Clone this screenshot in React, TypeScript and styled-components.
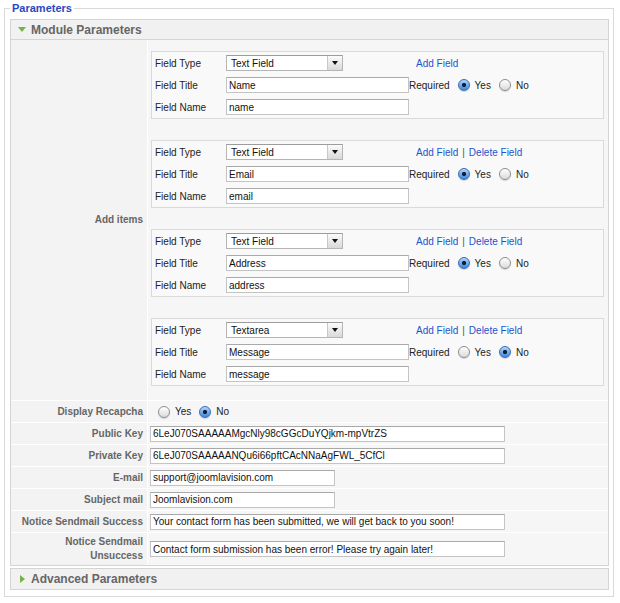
import React from 'react'
import styled, { createGlobalStyle } from 'styled-components'

const GlobalStyle = createGlobalStyle`
  body {
    margin: 0;
    background: #fff;
    font-family: "Liberation Sans", Arial, sans-serif;
  }
`

const Fieldset = styled.fieldset`
  margin: 1px 0 0 4px;
  width: 610px;
  min-width: 0;
  box-sizing: border-box;
  padding: 4px 4px 6px 5px;
  border: 1px solid #d9d9d9;
`

const Legend = styled.legend`
  padding: 0 2px;
  font-size: 11px;
  line-height: 14px;
  font-weight: bold;
  color: #2748c4;
`

const Panel = styled.div<{ $gap?: boolean }>`
  border: 1px solid #d4d4d4;
  background: #f5f5f5;
  margin-top: ${({ $gap }) => ($gap ? '2px' : '0')};
`

const PanelHeader = styled.div<{ $open?: boolean }>`
  display: flex;
  align-items: center;
  height: 20px;
  box-sizing: border-box;
  padding-left: 7px;
  background: #f1f1f1;
  border-bottom: ${({ $open }) => ($open ? '1px solid #d4d4d4' : 'none')};
  font-size: 12px;
  font-weight: bold;
  color: #666;
`

const Toggle = styled.span<{ $open?: boolean }>`
  display: flex;
  align-items: center;
  justify-content: center;
  width: 8px;
  height: 10px;
  margin-right: 5px;

  &::before {
    content: '';
    width: 0;
    height: 0;
    border-style: solid;
    border-color: transparent;
    ${({ $open }) =>
      $open
        ? 'border-width: 5px 4px 0 4px; border-top-color: #74b34a;'
        : 'border-width: 4px 0 4px 5px; border-left-color: #74b34a;'}
  }
`

const ParamGrid = styled.div`
  display: grid;
  grid-template-columns: 136px 1fr;
  gap: 1px;
  background: #fff;
`

const KeyCell = styled.div<{ $tall?: boolean }>`
  display: flex;
  align-items: center;
  justify-content: flex-end;
  text-align: right;
  min-height: ${({ $tall }) => ($tall ? '32px' : '21px')};
  padding-right: 4px;
  background: #f3f3f3;
  font-size: 10px;
  line-height: 14px;
  font-weight: bold;
  color: #666;
`

const ValueCell = styled.div`
  display: flex;
  align-items: center;
  padding: 0 2px;
  background: #f6f6f6;
  font-size: 10px;
  color: #222;
`

const ItemList = styled.div`
  display: flex;
  flex-direction: column;
  gap: 21px;
  padding: 11px 4px 14px 3px;
  background: #f6f6f6;
`

const ItemBox = styled.div`
  border: 1px solid #dadada;
  background: #f9f9f9;
  padding-left: 3px;
`

const ItemRow = styled.div`
  display: flex;
  align-items: center;
  height: 22px;
  font-size: 10px;
  color: #222;
`

const ItemLabel = styled.span`
  width: 71px;
  flex: none;
`

const Slot = styled.div`
  width: 190px;
  flex: none;
`

const TextInput = styled.input<{ $w: number }>`
  width: ${({ $w }) => $w}px;
  height: 16px;
  box-sizing: border-box;
  margin: 0;
  padding: 0 2px;
  border: 1px solid #c4c4c4;
  border-top-color: #a9a9a9;
  background: #fff;
  font-family: "Liberation Sans", Arial, sans-serif;
  font-size: 10px;
  color: #111;
  outline: none;
`

const Select = styled.div`
  display: flex;
  align-items: center;
  width: 117px;
  height: 16px;
  box-sizing: border-box;
  border: 1px solid #b5b5b5;
  border-top-color: #9c9c9c;
  background: #fff;
  font-size: 10px;
  color: #111;
`

const SelectText = styled.span`
  flex: 1;
  padding-left: 4px;
`

const SelectArrow = styled.span`
  display: flex;
  align-items: center;
  justify-content: center;
  width: 14px;
  height: 100%;
  border-left: 1px solid #c8c8c8;
  background: linear-gradient(#fbfbfb, #d9d9d9);

  &::before {
    content: '';
    border-style: solid;
    border-color: #111 transparent transparent transparent;
    border-width: 4px 3px 0 3px;
  }
`

const Radio = styled.input`
  appearance: none;
  width: 12px;
  height: 12px;
  box-sizing: border-box;
  margin: 0 5px 0 8px;
  border-radius: 50%;
  border: 1px solid #8e8e8e;
  background: linear-gradient(#ffffff, #dadada);
  box-shadow: 0 1px 1px rgba(0, 0, 0, 0.15);

  &:checked {
    border-color: #3b6daf;
    background: radial-gradient(circle, #0e1f36 0 1.8px, transparent 2.4px),
      linear-gradient(#b2d4f8, #3c86de);
  }
`

const Link = styled.a`
  color: #1b54cf;
  text-decoration: none;
  font-size: 10px;
`

const Sep = styled.span`
  color: #555;
  margin: 0 4px;
`

type Item = {
  type: string
  title: string
  name: string
  required: boolean
  removable: boolean
}

const items: Item[] = [
  { type: 'Text Field', title: 'Name', name: 'name', required: true, removable: false },
  { type: 'Text Field', title: 'Email', name: 'email', required: true, removable: true },
  { type: 'Text Field', title: 'Address', name: 'address', required: true, removable: true },
  { type: 'Textarea', title: 'Message', name: 'message', required: false, removable: true },
]

const YesNo = ({ yes }: { yes: boolean }) => (
  <>
    <Radio type="radio" checked={yes} readOnly />
    Yes
    <Radio type="radio" checked={!yes} readOnly />
    No
  </>
)

const ItemFields = ({ item }: { item: Item }) => (
  <ItemBox>
    <ItemRow>
      <ItemLabel>Field Type</ItemLabel>
      <Slot>
        <Select>
          <SelectText>{item.type}</SelectText>
          <SelectArrow />
        </Select>
      </Slot>
      <Link href="#">Add Field</Link>
      {item.removable && (
        <>
          <Sep>|</Sep>
          <Link href="#">Delete Field</Link>
        </>
      )}
    </ItemRow>
    <ItemRow>
      <ItemLabel>Field Title</ItemLabel>
      <TextInput $w={183} defaultValue={item.title} />
      Required
      <YesNo yes={item.required} />
    </ItemRow>
    <ItemRow>
      <ItemLabel>Field Name</ItemLabel>
      <TextInput $w={183} defaultValue={item.name} />
    </ItemRow>
  </ItemBox>
)

const textParams = [
  { label: 'Public Key', value: '6LeJ070SAAAAAMgcNly98cGGcDuYQjkm-mpVtrZS', w: 355 },
  { label: 'Private Key', value: '6LeJ070SAAAAANQu6i66pftCAcNNaAgFWL_5CfCl', w: 355 },
  { label: 'E-mail', value: 'support@joomlavision.com', w: 185 },
  { label: 'Subject mail', value: 'Joomlavision.com', w: 185 },
  {
    label: 'Notice Sendmail Success',
    value: 'Your contact form has been submitted, we will get back to you soon!',
    w: 355,
  },
]

const App = () => {
  return (
    <>
      <GlobalStyle />
      <Fieldset>
        <Legend>Parameters</Legend>
        <Panel>
          <PanelHeader $open>
            <Toggle $open />
            Module Parameters
          </PanelHeader>
          <ParamGrid>
            <KeyCell>Add items</KeyCell>
            <ItemList>
              {items.map((item) => (
                <ItemFields key={item.name} item={item} />
              ))}
            </ItemList>

            <KeyCell>Display Recapcha</KeyCell>
            <ValueCell>
              <YesNo yes={false} />
            </ValueCell>

            {textParams.map((p) => (
              <React.Fragment key={p.label}>
                <KeyCell>{p.label}</KeyCell>
                <ValueCell>
                  <TextInput $w={p.w} defaultValue={p.value} />
                </ValueCell>
              </React.Fragment>
            ))}

            <KeyCell $tall>
              Notice Sendmail
              <br />
              Unsuccess
            </KeyCell>
            <ValueCell>
              <TextInput $w={355} defaultValue="Contact form submission has been error! Please try again later!" />
            </ValueCell>
          </ParamGrid>
        </Panel>
        <Panel $gap>
          <PanelHeader>
            <Toggle />
            Advanced Parameters
          </PanelHeader>
        </Panel>
      </Fieldset>
    </>
  )
}

export default App
